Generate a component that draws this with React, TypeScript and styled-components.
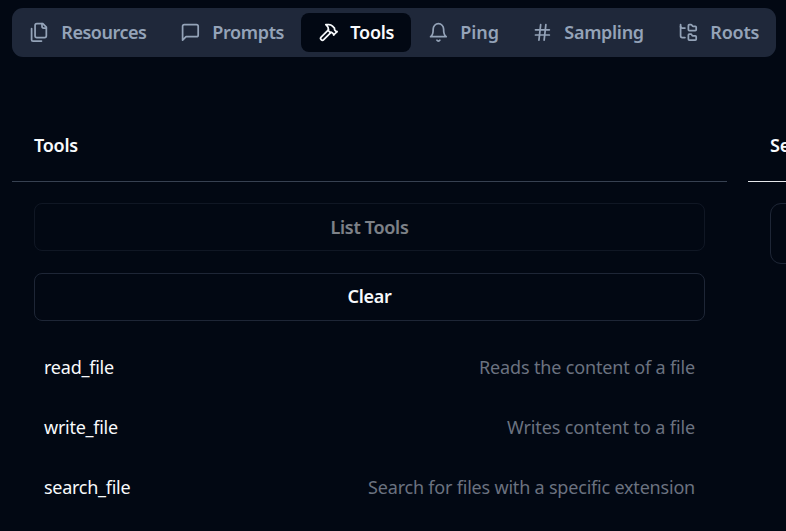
import React from "react";
import styled, { createGlobalStyle } from "styled-components";
import { Hash, FolderTree } from "lucide-react";

const GlobalStyle = createGlobalStyle`
  * { box-sizing: border-box; }
  body {
    margin: 0;
    background: #020813;
    color: #f8fafc;
    font-family: "Segoe UI", "Noto Sans", "Open Sans", sans-serif;
    font-size: 18px;
    line-height: 27px;
    overflow: hidden;
  }
`;

const Page = styled.main`
  height: 531px;
  padding: 8px 0 0 12px;
  overflow: hidden;
`;

const TabList = styled.nav`
  display: flex;
  align-items: center;
  width: 764px;
  height: 49px;
  border-radius: 11px;
  background: #1f283a;
`;

const Tab = styled.button<{ $width: number; $active?: boolean }>`
  display: flex;
  align-items: center;
  flex: 0 0 ${(p) => p.$width}px;
  height: 39px;
  padding: 0 0 0 17px;
  gap: 11.5px;
  border: 0;
  border-radius: 8px;
  background: ${(p) => (p.$active ? "#020813" : "transparent")};
  color: ${(p) => (p.$active ? "#f8fafc" : "#94a3b8")};
  font: inherit;
  font-weight: 600;
  white-space: nowrap;
`;

const Label = styled.span<{ $spacing?: number }>`
  letter-spacing: ${(p) => p.$spacing ?? 0}px;
`;

const Panels = styled.div`
  display: grid;
  grid-template-columns: 715px 715px;
  gap: 21px;
  margin-top: 53px;
`;

const Panel = styled.section`
  min-width: 0;
`;

const PanelHeader = styled.header<{ $line: string }>`
  height: 72px;
  padding: 22px 22px 0;
  border-bottom: 1px solid ${(p) => p.$line};
`;

const PanelTitle = styled.h3`
  margin: 0;
  font-size: 18px;
  font-weight: 600;
  line-height: 27px;
  letter-spacing: -0.25px;
`;

const PanelBody = styled.div`
  display: flex;
  flex-direction: column;
  padding: 21px 22px;
`;

const ActionButton = styled.button`
  height: 48px;
  margin-bottom: 22px;
  padding: 0 0 1px;
  border: 1px solid #1e2636;
  border-radius: 8px;
  background: transparent;
  color: #f8fafc;
  font: inherit;
  font-weight: 600;
  letter-spacing: -0.3px;
  &:disabled {
    padding: 0;
    opacity: 0.5;
  }
`;

const ToolList = styled.div`
  display: flex;
  flex-direction: column;
  gap: 12px;
`;

const ToolRow = styled.div`
  display: flex;
  align-items: center;
  justify-content: space-between;
  height: 48px;
  padding: 0 10px;
`;

const Description = styled.span<{ $spacing: number }>`
  color: #6b7280;
  letter-spacing: ${(p) => p.$spacing}px;
`;

const Notice = styled.div`
  height: 61px;
  border: 1px solid #1e2636;
  border-radius: 11px;
`;

const IconSvg = styled.svg`
  flex: none;
  width: 20.8px;
  height: 20.8px;
  fill: none;
  stroke: currentColor;
  stroke-width: 2;
  stroke-linecap: round;
  stroke-linejoin: round;
`;

const strokeIcon = (paths: string[]) => () => (
  <IconSvg viewBox="0 0 24 24">
    {paths.map((d) => (
      <path key={d} d={d} />
    ))}
  </IconSvg>
);

const FilesIcon = strokeIcon([
  "M20 7h-3a2 2 0 0 1-2-2V2",
  "M9 18a2 2 0 0 1-2-2V4a2 2 0 0 1 2-2h7l4 4v10a2 2 0 0 1-2 2Z",
  "M3 7.6v12.8A1.6 1.6 0 0 0 4.6 22h9.8",
]);
const MessageIcon = strokeIcon([
  "M21 15a2 2 0 0 1-2 2H7l-4 4V5a2 2 0 0 1 2-2h14a2 2 0 0 1 2 2z",
]);
const HammerIcon = strokeIcon([
  "m15 12-8.373 8.373a1 1 0 1 1-3-3L12 9",
  "m18 15 4-4",
  "m21.5 11.5-1.914-1.914A2 2 0 0 1 19 8.172V7l-2.26-2.26a6 6 0 0 0-4.202-1.756L9 2.96l.92.82A6.18 6.18 0 0 1 12 8.4V10l2 2h1.172a2 2 0 0 1 1.414.586L18.5 14.5",
]);
const BellIcon = strokeIcon([
  "M6 8a6 6 0 0 1 12 0c0 7 3 9 3 9H3s3-2 3-9",
  "M10.3 21a1.94 1.94 0 0 0 3.4 0",
]);
const HashIcon = () => <Hash size={20.8} />;
const TreeIcon = () => <FolderTree size={20.8} />;

const tabs: { name: string; icon: React.ComponentType; width: number; spacing: number }[] = [
  { name: "Resources", icon: FilesIcon, width: 151, spacing: -0.48 },
  { name: "Prompts", icon: MessageIcon, width: 138, spacing: -0.36 },
  { name: "Tools", icon: HammerIcon, width: 110, spacing: -0.25 },
  { name: "Ping", icon: BellIcon, width: 104, spacing: -0.1 },
  { name: "Sampling", icon: HashIcon, width: 146, spacing: -0.3 },
  { name: "Roots", icon: TreeIcon, width: 115, spacing: -0.22 },
];

const tools = [
  { name: "read_file", nameSpacing: -0.23, text: "Reads the content of a file", spacing: -0.15 },
  { name: "write_file", nameSpacing: -0.27, text: "Writes content to a file", spacing: -0.11 },
  { name: "search_file", nameSpacing: -0.28, text: "Search for files with a specific extension", spacing: -0.2 },
];

export default function App() {
  return (
    <>
      <GlobalStyle />
      <Page>
        <TabList>
          {tabs.map(({ name, icon: Icon, width, spacing }) => (
            <Tab key={name} $width={width} $active={name === "Tools"}>
              <Icon />
              <Label $spacing={spacing}>{name}</Label>
            </Tab>
          ))}
        </TabList>
        <Panels>
          <Panel>
            <PanelHeader $line="#374151">
              <PanelTitle>Tools</PanelTitle>
            </PanelHeader>
            <PanelBody>
              <ActionButton disabled>List Tools</ActionButton>
              <ActionButton>Clear</ActionButton>
              <ToolList>
                {tools.map((tool) => (
                  <ToolRow key={tool.name}>
                    <Label $spacing={tool.nameSpacing}>{tool.name}</Label>
                    <Description $spacing={tool.spacing}>{tool.text}</Description>
                  </ToolRow>
                ))}
              </ToolList>
            </PanelBody>
          </Panel>
          <Panel>
            <PanelHeader $line="#e5e7eb">
              <PanelTitle>Select a tool</PanelTitle>
            </PanelHeader>
            <PanelBody>
              <Notice />
            </PanelBody>
          </Panel>
        </Panels>
      </Page>
    </>
  );
}
